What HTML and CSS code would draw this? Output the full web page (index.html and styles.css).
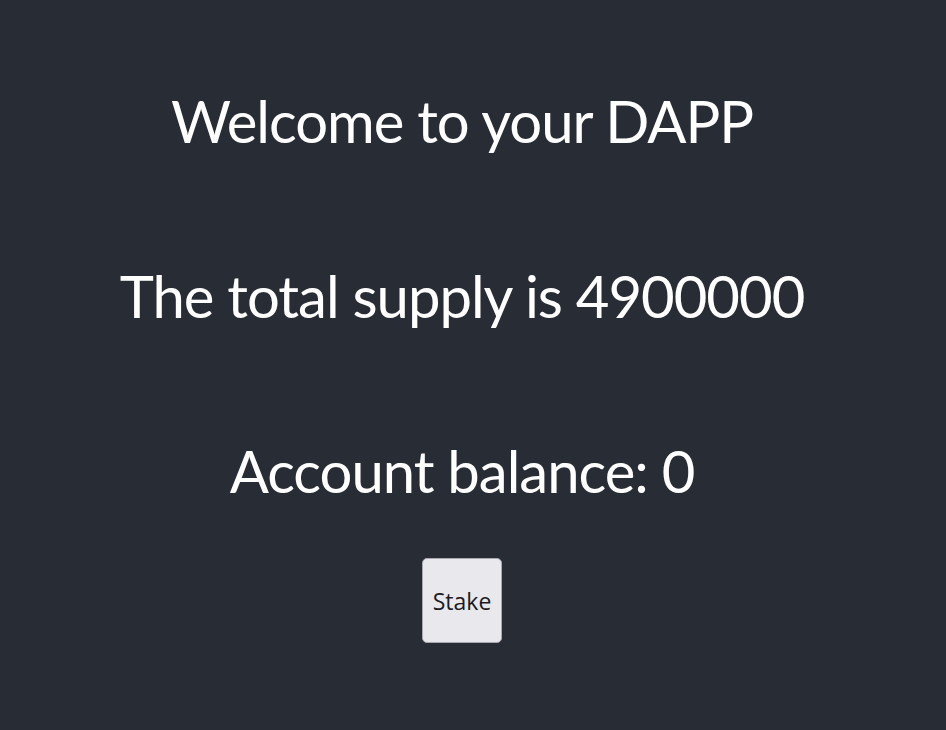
FILE: index.html
```html
<!DOCTYPE html>
<html lang="en">
<head>
<meta charset="utf-8">
<title>DAPP</title>
<link rel="stylesheet" href="styles.css">
</head>
<body>
<main class="app">
  <h1 class="line">Welcome to your DAPP</h1>
  <h1 class="line">The total supply is 4900000</h1>
  <h1 class="line">Account balance: 0</h1>
  <button class="stake" type="button">Stake</button>
</main>
</body>
</html>
```
FILE: styles.css
```css
html, body {
  margin: 0;
  padding: 0;
  background: #282c34;
  height: 100%;
}
.app {
  min-height: 730px;
  box-sizing: border-box;
  display: flex;
  flex-direction: column;
  align-items: center;
  padding: 86px 22px 0 0;
  font-family: Lato, "Open Sans", sans-serif;
  color: #ffffff;
}
.line {
  margin: 0 0 105px 0;
  font-size: 58px;
  font-weight: 400;
  letter-spacing: -1px;
  line-height: 70px;
  white-space: nowrap;
}
.line:nth-of-type(3) {
  margin-bottom: 52px;
}
.stake {
  width: 80px;
  height: 85px;
  box-sizing: border-box;
  padding: 0;
  background: #e9e9ed;
  border: 1px solid #a8a8b2;
  border-radius: 5px;
  color: #1b1b1f;
  font-family: "Open Sans", "Noto Sans", sans-serif;
  font-size: 23px;
}
```
